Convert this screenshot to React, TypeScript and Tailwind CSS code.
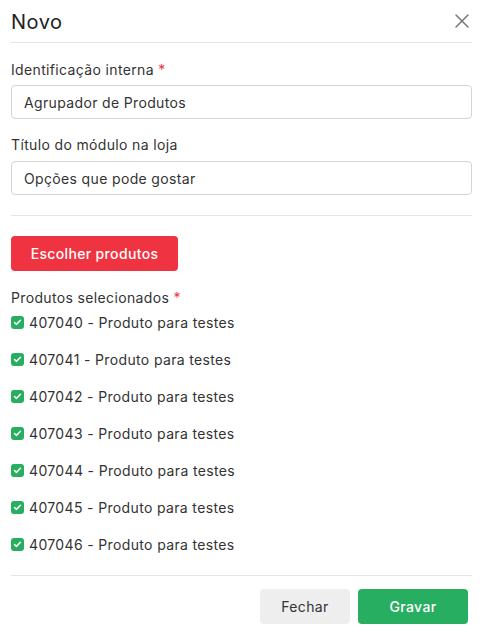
import { X, Check } from "lucide-react";

const produtos = [
  "407040",
  "407041",
  "407042",
  "407043",
  "407044",
  "407045",
  "407046",
];

export default function App() {
  return (
    <div className="w-[483px] h-[632px] bg-white text-[#333] font-['Inter',sans-serif] tracking-[0.35px] px-[11px]">
      <div className="flex items-center justify-between h-[43px] border-b border-[#e5e5e5]">
        <h1 className="text-[20px] text-[#222] pt-[1px] tracking-[0.5px]">Novo</h1>
        <X className="w-[24px] h-[24px] text-[#777] mr-[-2px]" strokeWidth={1.5} />
      </div>

      <div className="pt-[15px] pb-[20px] border-b border-[#e5e5e5] flex flex-col">
        <label className="text-[14px] leading-[24px]">
          Identificação interna <span className="text-[#ef3340]">*</span>
        </label>
        <input
          className="mt-[3px] h-[34px] w-full rounded-[4px] border border-[#d4d4d4] px-[12px] text-[14px] text-[#333] outline-none"
          defaultValue="Agrupador de Produtos"
        />
        <label className="text-[14px] leading-[24px] mt-[14px]">Título do módulo na loja</label>
        <input
          className="mt-[4px] h-[34px] w-full rounded-[4px] border border-[#d4d4d4] px-[12px] text-[14px] text-[#333] outline-none"
          defaultValue="Opções que pode gostar"
        />
      </div>

      <div className="pt-[20px] pb-[6px] border-b border-[#e5e5e5]">
        <button className="h-[35px] w-[167px] rounded-[4px] bg-[#ef3340] text-white text-[14px] font-medium">
          Escolher produtos
        </button>
        <div className="mt-[17px] text-[14px] leading-[20px]">
          Produtos selecionados <span className="text-[#ef3340]">*</span>
        </div>
        <ul className="mt-[2px] flex flex-col">
          {produtos.map((p) => (
            <li key={p} className="flex items-center gap-[5px] h-[37px] leading-[20px] text-[14px] pb-[12px]">
              <span className="w-[13px] h-[13px] rounded-[3px] bg-[#27ae60] flex items-center justify-center">
                <Check className="w-[9px] h-[9px] text-white" strokeWidth={4} />
              </span>
              {p} - Produto para testes
            </li>
          ))}
        </ul>
      </div>

      <div className="flex justify-end gap-[8px] pt-[13px] pr-[4px]">
        <button className="h-[35px] w-[90px] rounded-[4px] bg-[#eeeeee] text-[#333] text-[14px]">Fechar</button>
        <button className="h-[35px] w-[110px] rounded-[4px] bg-[#27ae60] text-white text-[14px] font-medium">Gravar</button>
      </div>
    </div>
  );
}
